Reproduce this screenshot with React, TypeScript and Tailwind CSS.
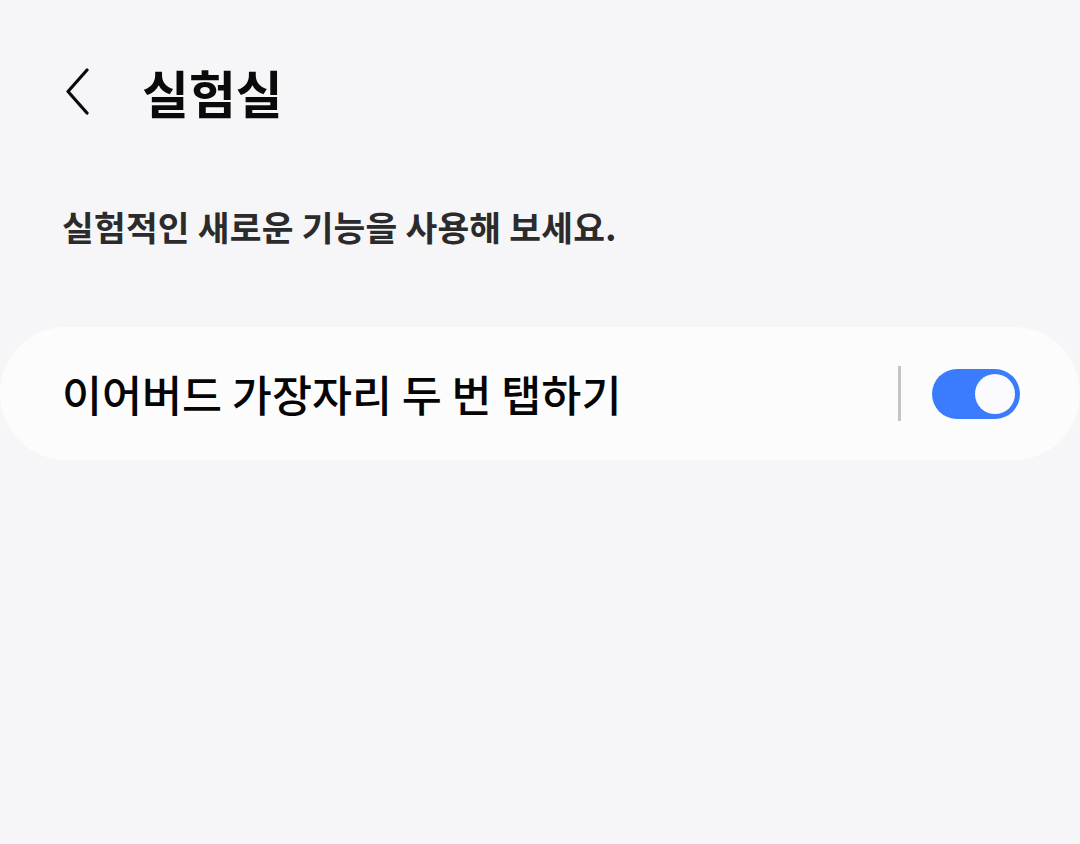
import { useState } from 'react'

const font = { fontFamily: '"Noto Sans CJK KR", "Noto Sans", sans-serif' }

export default function App() {
  const [enabled, setEnabled] = useState(true)

  return (
    <div className="w-[1080px] h-[844px] bg-[#f6f6f8] overflow-hidden" style={font}>
      {/* Header */}
      <header className="flex items-center h-[64px] mt-[60px] pl-[59px]">
        <button className="w-[36px] h-[50px] flex items-center justify-center">
          <svg width="28" height="48" viewBox="0 0 28 48" fill="none">
            <path d="M24 2 L5 23.5 L24 45" stroke="#0a0a0a" strokeWidth="3.2" strokeLinecap="round" strokeLinejoin="round" />
          </svg>
        </button>
        <h1 className="ml-[47px] text-[51px] font-bold text-[#0a0a0a] leading-none">실험실</h1>
      </header>

      {/* Description */}
      <p className="mt-[82px] pl-[62px] text-[34.5px] font-semibold text-[#2b2b2b] leading-[40px] tracking-[0.2px]">
        실험적인 새로운 기능을 사용해 보세요.
      </p>

      {/* Setting row */}
      <div className="mt-[81px] h-[133px] bg-[#fcfcfc] rounded-[66px] flex items-center pl-[62px] pr-[60px]">
        <span className="flex-1 text-[43.5px] font-medium text-[#050505] leading-none">이어버드 가장자리 두 번 탭하기</span>
        <div className="w-[3px] h-[55px] bg-[#c4c4c4] mr-[31px]" />
        <button
          onClick={() => setEnabled(!enabled)}
          className={`w-[88px] h-[50px] rounded-full flex items-center px-[5px] ${enabled ? 'bg-[#3a7cfd] justify-end' : 'bg-[#c8c8c8] justify-start'}`}
        >
          <span className="w-[40px] h-[40px] rounded-full bg-[#fafaff]" />
        </button>
      </div>
    </div>
  )
}
